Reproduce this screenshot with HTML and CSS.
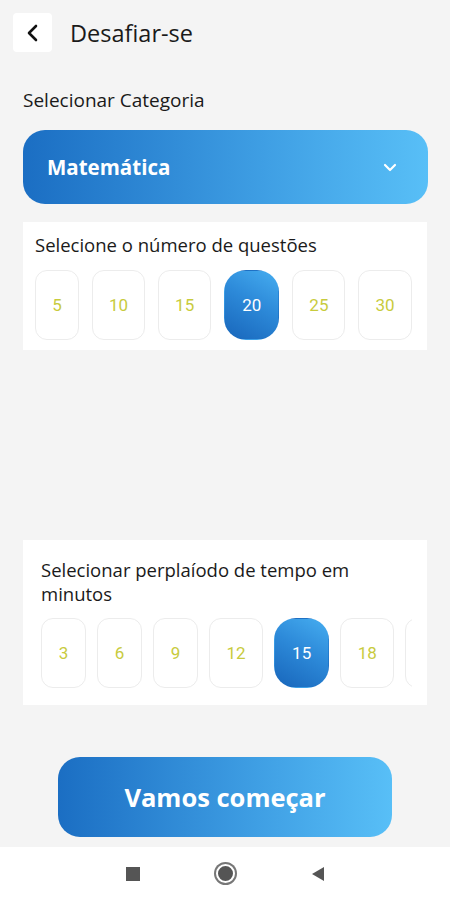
FILE: index.html
```html
<!DOCTYPE html>
<html lang="pt">
<head>
  <meta charset="UTF-8">
  <meta name="viewport" content="width=device-width, initial-scale=1.0">
  <title>Desafiar-se</title>
  <link rel="stylesheet" href="styles.css">
</head>
<body>
  <div class="screen">
    <header class="topbar">
      <button class="back" type="button" aria-label="Voltar">
        <svg width="14" height="18" viewBox="0 0 14 18"><path d="M10 2 L3 9 L10 16" fill="none" stroke="#111" stroke-width="2.6" stroke-linecap="round" stroke-linejoin="round"/></svg>
      </button>
      <h1 class="title">Desafiar-se</h1>
    </header>

    <p class="label">Selecionar Categoria</p>
    <div class="dropdown">
      <span>Matemática</span>
      <svg width="14" height="9" viewBox="0 0 14 9"><path d="M2 2 L7 7 L12 2" fill="none" stroke="#fff" stroke-width="2.2" stroke-linecap="round" stroke-linejoin="round"/></svg>
    </div>

    <section class="card card-questions">
      <p class="card-title">Selecione o número de questões</p>
      <div class="chips">
        <div class="chip">5</div>
        <div class="chip">10</div>
        <div class="chip">15</div>
        <div class="chip active">20</div>
        <div class="chip">25</div>
        <div class="chip">30</div>
      </div>
    </section>

    <section class="card card-time">
      <p class="card-title">Selecionar perplaíodo de tempo em minutos</p>
      <div class="chips">
        <div class="chip">3</div>
        <div class="chip">6</div>
        <div class="chip">9</div>
        <div class="chip">12</div>
        <div class="chip active">15</div>
        <div class="chip">18</div>
        <div class="chip"></div>
      </div>
    </section>

    <button class="start" type="button">Vamos começar</button>
  </div>

  <nav class="navbar">
    <span class="nav-square"></span>
    <span class="nav-home"></span>
    <svg width="14" height="16" viewBox="0 0 14 16"><path d="M13 1 L1 8 L13 15 Z" fill="#555"/></svg>
  </nav>
</body>
</html>
```

FILE: styles.css
```css
body {
  margin: 0;
  width: 450px;
  height: 900px;
  display: flex;
  flex-direction: column;
  background-color: #f4f4f4;
  font-family: "Open Sans", "Noto Sans", sans-serif;
  color: #1a1a1a;
  overflow: hidden;
}

.screen {
  flex: 1;
  display: flex;
  flex-direction: column;
}

.topbar {
  display: flex;
  align-items: center;
  padding: 13px 13px 0;
}

.back {
  width: 39px;
  height: 39px;
  border: none;
  border-radius: 4px;
  background-color: #fff;
  display: flex;
  align-items: center;
  justify-content: center;
  padding: 0;
}

.title {
  margin: 0 0 0 18px;
  font-size: 23.5px;
  font-weight: 400;
  line-height: 30px;
}

.label {
  margin: 36px 0 0 23px;
  font-size: 19px;
  line-height: 24px;
}

.dropdown {
  margin: 18px 22px 0 23px;
  height: 74px;
  border-radius: 22px;
  background: linear-gradient(90deg, #1b6ec3 0%, #3f9fe4 60%, #58bff7 100%);
  display: flex;
  align-items: center;
  justify-content: space-between;
  padding: 0 31px 0 24px;
  color: #fff;
  font-size: 20.5px;
  font-weight: 700;
}

.card {
  margin: 0 23px;
  background-color: #fff;
}

.card-title {
  margin: 0;
  font-size: 18.5px;
  line-height: 24px;
}

.card-questions {
  margin-top: 18px;
  padding: 11px 15px 10px 12px;
}

.card-questions .card-title {
  margin-bottom: 13px;
}

.card-questions .chips {
  gap: 13px;
}

.card-time {
  margin-top: 190px;
  padding: 18px 15px 17px 18px;
}

.card-time .card-title {
  max-width: 340px;
  margin-bottom: 12px;
}

.card-time .chips {
  gap: 11px;
}

.card-time .chip {
  padding: 0 16.5px;
}

.chips {
  display: flex;
  overflow: hidden;
}

.chip {
  flex-shrink: 0;
  min-width: 10px;
  height: 68px;
  padding: 0 16px;
  display: flex;
  align-items: center;
  justify-content: center;
  border: 1px solid #ececec;
  border-radius: 12px;
  background-color: #fff;
  font-family: Roboto, "Noto Sans", sans-serif;
  font-size: 17px;
  color: #c8cb3d;
}

.chip.active,
.card-time .chip.active {
  border-color: transparent;
  border-radius: 22px;
  padding: 0 17px;
  background: linear-gradient(30deg, #1866bb 0%, #2d8ad9 55%, #46adf0 100%);
  color: #fff;
}

.start {
  margin: 52px auto 0;
  width: 334px;
  height: 80px;
  border: none;
  border-radius: 22px;
  background: linear-gradient(90deg, #1b6ec3 0%, #3f9fe4 60%, #58bff7 100%);
  color: #fff;
  font-family: "Open Sans", "Noto Sans", sans-serif;
  font-size: 25.5px;
  font-weight: 700;
}

.navbar {
  height: 53px;
  background-color: #fff;
  display: flex;
  align-items: center;
  justify-content: center;
  gap: 76px;
}

.nav-square {
  width: 14px;
  height: 14px;
  background-color: #555;
}

.nav-home {
  width: 15px;
  height: 15px;
  border-radius: 50%;
  background-color: #555;
  border: 2px solid #fff;
  box-shadow: 0 0 0 2px #777;
}
```
